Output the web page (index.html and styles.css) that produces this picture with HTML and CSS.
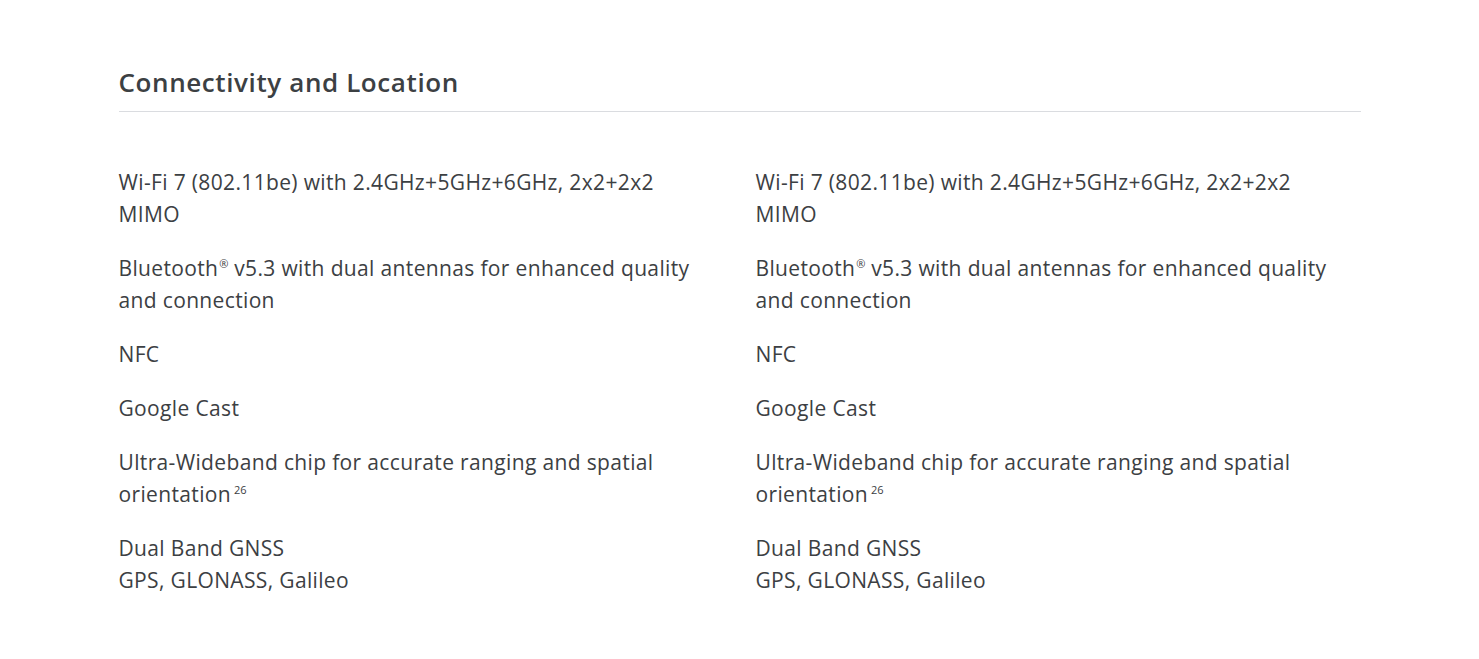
FILE: index.html
```html
<!DOCTYPE html>
<html lang="en">
<head>
<meta charset="utf-8">
<title>Connectivity and Location</title>
<link rel="stylesheet" href="styles.css">
</head>
<body>
<section class="specs">
  <h2 class="specs-title">Connectivity and Location</h2>
  <div class="specs-grid">
    <div class="specs-col">
      <p class="spec">Wi-Fi 7 (802.11be) with 2.4GHz+5GHz+6GHz, 2x2+2x2 MIMO</p>
      <p class="spec">Bluetooth<sup class="reg">®</sup> v5.3 with dual antennas for enhanced quality and connection</p>
      <p class="spec">NFC</p>
      <p class="spec">Google Cast</p>
      <p class="spec">Ultra-Wideband chip for accurate ranging and spatial orientation<sup class="note">26</sup></p>
      <p class="spec">Dual Band GNSS<br>GPS, GLONASS, Galileo</p>
    </div>
    <div class="specs-col">
      <p class="spec">Wi-Fi 7 (802.11be) with 2.4GHz+5GHz+6GHz, 2x2+2x2 MIMO</p>
      <p class="spec">Bluetooth<sup class="reg">®</sup> v5.3 with dual antennas for enhanced quality and connection</p>
      <p class="spec">NFC</p>
      <p class="spec">Google Cast</p>
      <p class="spec">Ultra-Wideband chip for accurate ranging and spatial orientation<sup class="note">26</sup></p>
      <p class="spec">Dual Band GNSS<br>GPS, GLONASS, Galileo</p>
    </div>
  </div>
</section>
</body>
</html>
```
FILE: styles.css
```css
* { box-sizing: border-box; }
html, body { margin: 0; padding: 0; background: #fff; }
body {
  font-family: "Open Sans", "Liberation Sans", sans-serif;
  color: #3c4043;
}
.specs {
  max-width: 1242px;
  margin: 0 auto;
  padding-top: 64px;
}
.specs-title {
  margin: 0;
  font-size: 26px;
  font-weight: 650;
  letter-spacing: 0.6px;
  line-height: 36px;
  color: #3c4043;
  padding-bottom: 11px;
  border-bottom: 1px solid #dadce0;
}
.specs-grid {
  display: grid;
  grid-template-columns: 1fr 1fr;
  column-gap: 32px;
  padding-top: 54px;
}
.specs-col {
  display: flex;
  flex-direction: column;
  gap: 22px;
}
.spec {
  margin: 0;
  font-size: 21px;
  letter-spacing: 0.35px;
  line-height: 32px;
  max-width: 590px;
}
sup { line-height: 1; letter-spacing: 0; }
.reg { font-size: 11px; vertical-align: super; margin-left: 1px; }
.note { font-size: 11px; vertical-align: super; margin-left: 3px; }
```
